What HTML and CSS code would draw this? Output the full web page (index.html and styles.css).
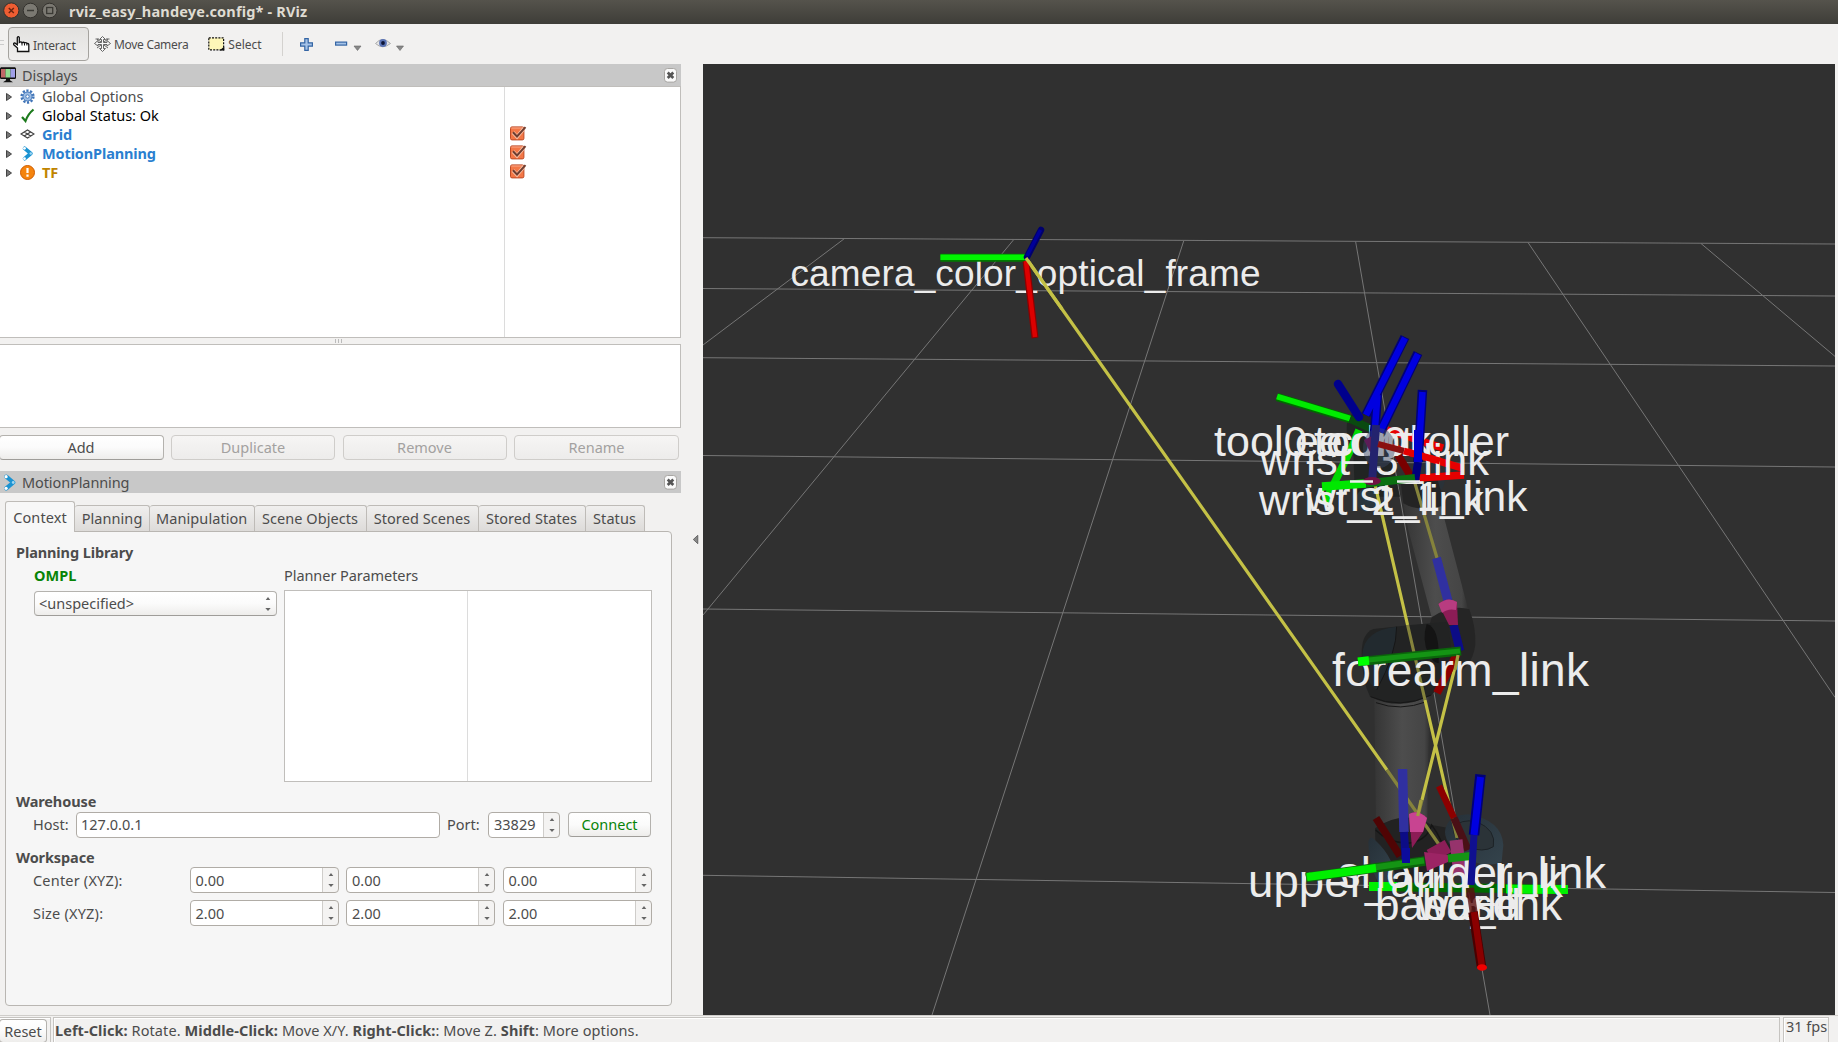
FILE: index.html
```html
<!DOCTYPE html>
<html lang="en">
<head>
<meta charset="utf-8">
<title>rviz_easy_handeye.config* - RViz</title>
<link rel="stylesheet" href="styles.css">
</head>
<body>
<svg width="0" height="0" class="defs">
  <defs>
    <symbol id="arm" viewBox="0 0 16 16"><path d="M5 2.500 L11.500 8 L5 13.500" fill="none" stroke="#1b93d2" stroke-width="4" stroke-linejoin="round" stroke-linecap="round"/><circle cx="4.800" cy="2.500" r="1.500" fill="#fff"/><circle cx="11.500" cy="8" r="1.300" fill="#9fd6f2"/><circle cx="4.800" cy="13.500" r="1.500" fill="#fff"/></symbol>
    <symbol id="tri" viewBox="0 0 8 10"><path d="M1.500 1.500 L6.500 5 L1.500 8.500 Z" fill="#777" stroke="#444" stroke-width="1"/></symbol>
    <symbol id="check" viewBox="0 0 17 15"><rect x="0.500" y="0.900" width="13.400" height="13" rx="1.500" fill="#f37746" stroke="#bd4b26"/><path d="M1.500 2 H13" stroke="#f9a98a"/><path d="M3 6.500 L7 10.800 L14 2.500" fill="none" stroke="#fbc0a5" stroke-width="3.600"/><path d="M3 6.200 L7 10.500 L15.500 1.200" fill="none" stroke="#6e3d30" stroke-width="2"/></symbol>
    <symbol id="close" viewBox="0 0 13 15"><rect x="0.500" y="0.500" width="12" height="13.600" rx="3" fill="#fafafa" stroke="#a8a6a3"/><path d="M3.700 4.500 L9.300 10 M9.300 4.500 L3.700 10" stroke="#555" stroke-width="2.700"/></symbol>
    <symbol id="spin" viewBox="0 0 8 16"><path d="M1.700 4 L4 1 L6.300 4 Z M1.300 12 L4 15 L6.700 12 Z" fill="#666"/></symbol>
  </defs>
</svg>
<header class="titlebar">
  <svg width="60" height="24" viewBox="0 0 60 24"><circle cx="11.300" cy="10.500" r="7.600" fill="#ee5d32" stroke="#33312d"/><path d="M8.800 8 L13.800 13 M13.800 8 L8.800 13" stroke="#6a2410" stroke-width="1.500"/><circle cx="30.500" cy="10.500" r="7.300" fill="#7b7972" stroke="#33312d"/><path d="M27 10.500 H34" stroke="#3a3934" stroke-width="1.500"/><circle cx="49.700" cy="10.500" r="7.300" fill="#7b7972" stroke="#33312d"/><rect x="46.700" y="7.500" width="6" height="6" fill="none" stroke="#3a3934" stroke-width="1.300"/></svg>
  <span class="title">rviz_easy_handeye.config* - RViz</span>
</header>
<nav class="toolbar">
  <span class="grip"></span>
  <button class="tool active"><svg width="18" height="18" viewBox="0 0 18 18"><path d="M4.500 16.500 V13 L.8 9.800 Q0 8 1.800 8 L4.300 9.800 V2.500 Q5.300 .6 6.300 2.500 V7.500 Q8 6.300 9 7.800 Q10.500 6.600 11.500 8 Q13.100 7 14 8.600 Q15.500 8 15.800 9.700 V16.500 Z" fill="#fff" stroke="#111" stroke-width="1.300"/><path d="M9 8 V10.500 M11.500 8.300 V10.500 M13.900 8.800 V10.500" stroke="#111"/></svg><span>Interact</span></button>
  <button class="tool move"><svg width="17" height="16" viewBox="0 0 17 16"><g fill="#f8f8f8" stroke="#555" stroke-width="0.900"><path d="M8.500 .5 L11.500 3.500 H9.500 V6.500 H13 V4.500 L16.500 7.500 L13 10 V8.500 H9.500 V12.500 H11.500 L8.500 15.500 L5.500 12.500 H7.500 V8.500 H4 V10 L.5 7.500 L4 4.500 V6.500 H7.500 V3.500 H5.500 Z"/><path d="M3 3 L7 6 M14 3 L10 6 M3 12 L7 9 M14 12 L10 9 M1.500 3 H5 M12 3 H15.500"/></g></svg><span>Move Camera</span></button>
  <button class="tool select"><svg width="17" height="14" viewBox="0 0 17 14"><rect x="0.800" y="0.800" width="14.800" height="12" fill="#fdf6b8" stroke="#111" stroke-width="1.200" stroke-dasharray="2 1.200"/><path d="M16.300 9.500 V13.500 H11.500 Z" fill="#111"/></svg><span>Select</span></button>
  <span class="sep"></span>
  <svg class="plus" width="13" height="13" viewBox="0 0 13 13"><path d="M4.800 .6 H8.200 V4.800 H12.400 V8.200 H8.200 V12.400 H4.800 V8.200 H.6 V4.800 H4.800 Z" fill="#a5c3e8" stroke="#3465a4" stroke-width="1.200"/></svg>
  <svg class="minus" width="27" height="14" viewBox="0 0 27 14"><rect x="0.600" y="5.100" width="11" height="3" fill="#a5c3e8" stroke="#3465a4" stroke-width="1.200"/><path d="M19 9 H26 L22.500 13.500 Z" fill="#888" stroke="#666" stroke-width="0.600"/></svg>
  <svg class="eye" width="29" height="14" viewBox="0 0 29 14"><path d="M.5 6.500 Q7.500 -1.500 15.500 6.500 Q7.500 13 .5 6.500 Z" fill="#e6e6e6" stroke="#aaa"/><circle cx="8" cy="6" r="3.900" fill="#5b74b5"/><circle cx="8" cy="6" r="1.900" fill="#0c1436"/><path d="M21.500 9 H28.500 L25 13.500 Z" fill="#888" stroke="#666" stroke-width="0.600"/></svg>
</nav>
<main class="work">
  <section class="side">
    <div class="dock-title"><svg width="17" height="16" viewBox="0 0 17 16"><rect x="0.500" y="0.800" width="15" height="10.700" rx="0.500" fill="#111" stroke="#111"/><path d="M1 2 H5.500 V10.500 H1Z" fill="#c06868"/><path d="M5.500 2 H10.500 V10.500 H5.500Z" fill="#90dc90"/><path d="M10.500 2 H15 V10.500 H10.500Z" fill="#a0a0e8"/><path d="M6 11.500 H10 V13.300 L13 15.300 H3 L6 13.300Z" fill="#111"/></svg><span class="dt">Displays</span><svg class="close" width="13" height="15"><use href="#close"/></svg></div>
    <div class="tree">
      <div class="names">
        <div class="row"><svg width="8" height="10"><use href="#tri"/></svg><svg class="ic" width="15" height="15" viewBox="0 0 16 16"><circle cx="8" cy="8" r="6.300" fill="none" stroke="#3f74b8" stroke-width="2.600" stroke-dasharray="2.300 1.660"/><circle cx="8" cy="8" r="4.800" fill="#9dbde4" stroke="#3f74b8"/><circle cx="8" cy="8" r="1.800" fill="#fff" stroke="#3f74b8" stroke-width="1"/></svg><span>Global Options</span></div>
        <div class="row black"><svg width="8" height="10"><use href="#tri"/></svg><svg class="ic" width="15" height="15" viewBox="0 0 15 15"><path d="M2 9 L5.500 13 Q8 6 13.500 1.500" fill="none" stroke="#1c7a1c" stroke-width="2.200"/></svg><span>Global Status: Ok</span></div>
        <div class="row blue"><svg width="8" height="10"><use href="#tri"/></svg><svg class="ic" width="15" height="15" viewBox="0 0 15 15"><path d="M1 7 L7.500 3 L14 7 L7.500 11 Z M4.200 5 L10.700 9 M10.700 5 L4.200 9" fill="none" stroke="#444" stroke-width="1.200"/></svg><span>Grid</span></div>
        <div class="row blue"><svg width="8" height="10"><use href="#tri"/></svg><svg class="ic" width="15" height="15"><use href="#arm"/></svg><span>MotionPlanning</span></div>
        <div class="row amber"><svg width="8" height="10"><use href="#tri"/></svg><svg class="ic" width="15" height="15" viewBox="0 0 15 15"><circle cx="7.500" cy="7.500" r="7" fill="#f5840e" stroke="#ce5c00"/><path d="M7.500 3 V8 M7.500 9.500 V11.800" stroke="#fff" stroke-width="2.200"/></svg><span>TF</span></div>
      </div>
      <div class="checks">
        <svg width="17" height="15"><use href="#check"/></svg><svg width="17" height="15"><use href="#check"/></svg><svg width="17" height="15"><use href="#check"/></svg>
      </div>
    </div>
    <div class="splitter"><i></i><i></i><i></i></div>
    <div class="help"></div>
    <div class="buttons"><button class="btn">Add</button><button class="btn off">Duplicate</button><button class="btn off">Remove</button><button class="btn off">Rename</button></div>
    <div class="dock-title"><svg class="armic" width="17" height="17"><use href="#arm"/></svg><span class="dt2">MotionPlanning</span><svg class="close" width="13" height="15"><use href="#close"/></svg></div>
    <div class="tabs"><span class="tab on">Context</span><span class="tab w1">Planning</span><span class="tab w2">Manipulation</span><span class="tab w3">Scene Objects</span><span class="tab w4">Stored Scenes</span><span class="tab w5">Stored States</span><span class="tab w6">Status</span></div>
    <div class="pane">
      <h3>Planning Library</h3>
      <div class="planning">
        <div class="lib"><b>OMPL</b><div class="combo"><span>&lt;unspecified&gt;</span><svg width="8" height="16"><use href="#spin"/></svg></div></div>
        <div class="params"><span>Planner Parameters</span><div class="table"><div class="half"></div></div></div>
      </div>
      <h3 class="wh">Warehouse</h3>
      <div class="hostrow"><label>Host:</label><div class="field">127.0.0.1</div><label class="port">Port:</label><div class="spin p"><span>33829</span><svg width="8" height="16"><use href="#spin"/></svg></div><button class="btn connect">Connect</button></div>
      <h3 class="ws">Workspace</h3>
      <div class="xyz"><label>Center (XYZ):</label><div class="spin"><span>0.00</span><svg width="8" height="16"><use href="#spin"/></svg></div><div class="spin"><span>0.00</span><svg width="8" height="16"><use href="#spin"/></svg></div><div class="spin"><span>0.00</span><svg width="8" height="16"><use href="#spin"/></svg></div></div>
      <div class="xyz"><label>Size (XYZ):</label><div class="spin"><span>2.00</span><svg width="8" height="16"><use href="#spin"/></svg></div><div class="spin"><span>2.00</span><svg width="8" height="16"><use href="#spin"/></svg></div><div class="spin"><span>2.00</span><svg width="8" height="16"><use href="#spin"/></svg></div></div>
    </div>
  </section>
  <div class="gutter"><svg width="7" height="12" viewBox="0 0 7 12"><path d="M5.800 1.300 L1.300 5.500 L5.800 9.700 Z" fill="#888" stroke="#555" stroke-width="0.800"/></svg></div>
  <svg class="view" width="1132" height="951" viewBox="703 64 1132 951">
    <defs>
      <linearGradient id="tube" x1="0" x2="1" y1="0" y2="0"><stop offset="0" stop-color="#353535"/><stop offset="0.500" stop-color="#4d4d4d"/><stop offset="0.900" stop-color="#454545"/><stop offset="1" stop-color="#303030"/></linearGradient>
      <linearGradient id="steel" x1="0" x2="1" y1="0" y2="1"><stop offset="0" stop-color="#263038"/><stop offset="1" stop-color="#34434c"/></linearGradient>
    </defs>
    <rect x="703" y="64" width="1132" height="951" fill="#303030"/>
    <g stroke="#767676" stroke-width="1" fill="none">
      <path d="M703 237.700 L1835 244 M703 288.500 L1835 296 M703 357.700 L1835 366 M703 455.500 L1835 467 M703 609 L1835 621 M703 875.300 L1835 892.500"/>
      <path d="M843.900 239 L703 345 M1013.400 240 L703 615 M1183.700 241 L932 1015 M1355.600 241.500 L1490 1015 M1528 242.500 L1835 697.400 M1701 243.500 L1835 356.400"/>
    </g>
    <!-- robot body, local units are thirds of a pixel -->
    <g transform="translate(1200 530) scale(.33333)">
      <path d="M607 -90 L708 -130 L742 0 L805 240 L695 262 L625 0 Z" fill="url(#tube)"/>
      <path d="M523 500 L690 500 L684 720 L682 880 L528 880 Z" fill="url(#tube)"/>
      <path d="M695 262 Q755 222 808 238 Q828 290 826 345 Q815 420 755 432 L700 480 L690 280 Z" fill="#252525"/>
      <path d="M485 370 Q485 310 520 297 L640 284 L745 275 L760 430 L694 495 Q600 545 510 500 Q485 450 485 370 Z" fill="#222323"/>
      <path d="M487 375 Q490 300 590 290 Q590 370 530 480 Q485 440 487 375 Z" fill="#222a2f"/>
      <path d="M680 282 Q720 290 716 400 Q700 400 685 370 Q665 330 680 282 Z" fill="#141414"/>
      <path d="M512 500 Q600 540 694 495 M528 518 Q600 545 680 515 M590 290 Q590 370 530 480" fill="none" stroke="#161616" stroke-width="3"/>
    </g>
    <g transform="translate(1220 750) scale(.33333)">
      <path d="M465 235 Q550 175 635 225 L690 235 L740 330 L640 400 L470 400 Z" fill="#222"/>
      <path d="M467 240 Q500 275 560 280 Q620 275 635 225 Q670 270 680 330" fill="none" stroke="#151515" stroke-width="4"/>
      <path d="M445 275 Q450 255 465 270 Q530 330 525 400 L475 400 Q445 340 445 275 Z" fill="url(#steel)"/>
      <path d="M675 245 Q680 195 745 193 Q845 210 850 285 L845 335 Q800 355 750 330 Q675 290 675 245 Z" fill="url(#steel)"/>
      <path d="M700 235 Q720 205 770 215 Q830 240 820 290 Q790 310 740 290 Q700 270 700 235 Z" fill="#2b3338" stroke="#1c2226" stroke-width="3"/>
    </g>
    <g transform="translate(1180 320) scale(.33333)">
      <path d="M505 290 Q540 265 580 290 L640 440 L660 530 L525 530 L520 400 Q490 340 505 290Z" fill="#1f2221" fill-opacity="0.850"/>
      <path d="M700 440 Q790 400 795 480 Q790 520 760 520 Z" fill="#2a3238"/>
      <path d="M660 470 L770 470 L795 555 Q720 580 670 550Z" fill="#242424"/>
      <ellipse cx="560" cy="540" rx="32" ry="35" fill="#2a363d"/>
    </g>
    <g stroke="#c4c146" stroke-width="3.200" fill="none">
      <path d="M1026 258 L1387 770 M1374 480 L1407.600 625 M1425 700 L1451.700 815 M1458 655 L1422 800"/>
      <path d="M1387 770 L1440 846 M1407.600 625 L1425 700 M1414 480 L1437 558 M1422 800 L1417.700 817 M1451.700 815 L1457 838" stroke="#85833c"/>
    </g>
    <g stroke-width="7.500" fill="none">
      <path d="M1359 430 L1352 447 L1324 504" stroke="#00d800"/>
      <path d="M1277 397 L1350 419" stroke="#006a00" stroke-width="8.500"/><path d="M1277 396.500 L1350 418.500" stroke="#00ec00" stroke-width="6"/><path d="M1350 419 L1374 430" stroke="#0a4a10"/>
      <path d="M1376 818 L1400 856" stroke="#500404"/><path d="M1439 786 L1454 818" stroke="#8c0000" stroke-width="6.500"/><path d="M1454 818 L1468 850" stroke="#4a1016"/>
      <path d="M1369 886.500 L1568 889.500" stroke="#006a00" stroke-width="9"/><path d="M1369 886.500 H1397 M1506 889 L1568 889.500" stroke="#00f000" stroke-width="9"/>
      <path d="M1430 856 L1448 846" stroke="#8c1e58" stroke-width="14"/>
      <path d="M1456 840 L1460 875" stroke="#96336c" stroke-width="13"/>
      <path d="M1387 430 L1443 448 M1378 443 L1462 468" stroke="#e60000"/><path d="M1398 455 L1413 480" stroke="#7a0000"/><path d="M1419 478 L1464 475" stroke="#e60000"/>
      <path d="M1457 654 L1437 693" stroke="#8c0000" stroke-width="8"/>
    </g>
    <g class="labels">
      <text x="790.500" y="286" font-size="37" textLength="470">camera_color_optical_frame</text>
      <text x="1214" y="455.700" font-size="43" textLength="295">tool0_controller</text>
      <text x="1314" y="455.700" font-size="43" textLength="93">tool0</text>
      <text x="1295" y="455.700" font-size="43" textLength="136">ee_link</text>
      <text x="1260" y="474.700" font-size="43.500" textLength="229">wrist_3_link</text>
      <text x="1259" y="514.700" font-size="43" textLength="225">wrist_2_link</text>
      <text x="1305.500" y="510.700" font-size="42.500" textLength="222">wrist_1_link</text>
      <text x="1332" y="685.600" font-size="46" textLength="257">forearm_link</text>
      <text x="1338" y="887.700" font-size="45" textLength="268">shoulder_link</text>
      <text x="1248" y="897" font-size="45.500" textLength="315">upper_arm_link</text>
      <text x="1375" y="920" font-size="44" textLength="187">base_link</text>
      <text x="1422" y="920" font-size="44" textLength="95">base</text>
      <text x="1417" y="920" font-size="44" textLength="104">world</text>
    </g>
    <!-- frame axes drawn in front of the captions -->
    <g fill="none" stroke-width="8">
      <path d="M940.400 257.700 H1025" stroke="#007a00"/><path d="M940.400 257.200 H1025" stroke="#00f500" stroke-width="5.500"/>
      <path d="M1041 230 L1027 257" stroke="#00006c" stroke-width="6.500" stroke-linecap="round"/><path d="M1040.500 230 L1027 256" stroke="#00009a" stroke-width="3.500"/>
      <path d="M1026 261 L1035 338" stroke="#8c0000" stroke-width="7"/><path d="M1026 261 L1035 337" stroke="#dc0000" stroke-width="4.500"/>
      <path d="M1026 258 L1062 309" stroke="#c4c146" stroke-width="3.200"/>
      <path d="M1338 384 L1359 417" stroke="#00008c" stroke-linecap="round" stroke-width="8.500"/>
      <path d="M1405 337 L1366 415 M1418 353 L1380 432 M1377.500 393 L1374 440 M1422.500 390 L1418 462" stroke="#000078" stroke-width="9.500"/>
      <path d="M1405 338 L1366 415 M1418 354 L1380 432 M1377.500 395 L1374 440 M1422.500 392 L1418 462" stroke="#0000e0" stroke-width="6.500"/>
      <ellipse cx="1379" cy="448" rx="16" ry="20" fill="#3c4a66" fill-opacity="0.450"/>
      <path d="M1368 438 L1374 450" stroke="#5c1c58" stroke-width="9"/>
      <path d="M1376 425 L1372 483" stroke="#23236e"/><path d="M1418 462 L1415 482" stroke="#00007c"/>
      <path d="M1378 444 L1404 451" stroke="#8a1010" stroke-width="6"/><path d="M1404 451 L1440 461" stroke="#e60000" stroke-width="7"/>
      <path d="M1418 430 V462" stroke="#0000d0"/>
      <path d="M1322 486.500 L1366 483.500" stroke="#00e800" stroke-width="8.500"/><path d="M1366 483.500 L1415 478" stroke="#0a7010"/>
      <ellipse cx="1372" cy="481" rx="9" ry="4" fill="#701244"/>
      <path d="M1350 481.500 H1373 M1397 481.500 H1420" stroke="#ececec" stroke-width="2.500"/>
      <path d="M1436.500 558 L1448 601" stroke="#3030a0" stroke-width="9"/>
      <path d="M1453.500 625 L1460 651" stroke="#0c0c86" stroke-width="8.500"/>
      <path d="M1438.500 604 Q1448 596 1457 602 L1458 625 H1449 Z" fill="#8c1c56"/><path d="M1438.500 604 Q1448 596 1457 602 L1456 610 Q1448 608 1442 613 Z" fill="#b83c80"/>
      <path d="M1358 661.700 L1461 651" stroke="#0b650b" stroke-width="9"/><path d="M1358 661 L1460 651" stroke="#149414" stroke-width="5"/><path d="M1358 661.700 L1369 660.500" stroke="#00ff00" stroke-width="8.500"/>
      <path d="M1409 814 Q1418 809 1427 818 L1423 832 L1412 848 Z" fill="#8c1c56"/><path d="M1409 814 Q1418 809 1427 818 L1423 832 H1410 Z" fill="#c84491"/>
      <path d="M1458 655 L1455 670 M1421 800 L1417.700 816" stroke="#a39f40" stroke-width="3.200"/>
      <path d="M1402.500 769 L1404 832" stroke="#3030a0" stroke-width="9.500"/><path d="M1404 832 L1406 865" stroke="#0c0c86"/>
      <path d="M1306 877.500 L1425 861" stroke="#0b650b" stroke-width="9.500"/><path d="M1306 877 L1424 860.500" stroke="#149414" stroke-width="6"/><path d="M1307 877 L1376 868" stroke="#00f000" stroke-width="8"/>
      <path d="M1406 848 V863" stroke="#0c0c9c"/>
      <path d="M1424 852 L1448 855 L1448 862 L1427 871 Z" fill="#9c2464"/>
      <path d="M1448 858.500 L1471 856" stroke="#149414" stroke-width="8"/>
      <path d="M1480.500 774.500 L1474 835" stroke="#000078" stroke-width="10.500"/><path d="M1480.500 777 L1474 835" stroke="#0000e0" stroke-width="7"/><path d="M1474 835 L1471 885" stroke="#101090" stroke-width="7"/>
      <path d="M1470 888 L1474 915" stroke="#5a1010" stroke-opacity="0.800"/><path d="M1473 912 L1481.500 967" stroke="#4a0000" stroke-width="9.500"/><path d="M1474 912 L1482 967" stroke="#8a0000" stroke-width="6.500"/><ellipse cx="1482" cy="967.500" rx="5" ry="3.200" fill="#f00000"/>
    </g>
  </svg>
</main>
<footer class="status">
  <div class="cell reset"><button class="btn">Reset</button></div>
  <div class="cell msg"><b>Left-Click:</b> Rotate. <b>Middle-Click:</b> Move X/Y. <b>Right-Click:</b>: Move Z. <b>Shift</b>: More options.</div>
  <div class="cell fps">31 fps</div>
</footer>
</body>
</html>
```
FILE: styles.css
```css
* { box-sizing: border-box; }
body { margin: 0; width: 1838px; height: 1042px; overflow: hidden; display: flex; flex-direction: column; background: #f2f1f0; color: #4c4c4c; font: 14.5px/19px "Noto Sans", sans-serif; white-space: nowrap; }
button { font: inherit; color: inherit; padding: 0; margin: 0; border: 0; background: none; display: flex; align-items: center; justify-content: center; }
svg { flex: none; display: block; }
.defs { display: none; }
.titlebar { height: 24px; flex: none; display: flex; background: linear-gradient(#55534c, #3e3d38); color: #dfdbd2; font-weight: 700; }
.title { margin-left: 9px; line-height: 22px; font-size: 14.500px; letter-spacing: 0.180px; }
.toolbar { height: 40px; flex: none; display: flex; align-items: center; font-size: 12px; }
.grip { width: 4px; height: 8px; margin-right: 4px; background: repeating-linear-gradient(#ccc 0 1px, transparent 1px 4px); }
.tool { height: 33px; }
.active { width: 81px; height: 34px; justify-content: flex-start; padding-left: 4px; gap: 2px; border: 1px solid #a5a39f; border-radius: 4px; background: linear-gradient(#e3e2e0, #efeeed); letter-spacing: -0.200px; }
.active span { padding-top: 2px; }
.move { margin-left: 5px; gap: 3px; letter-spacing: -0.300px; }
.select { margin-left: 20px; gap: 3px; }
.sep { width: 1px; height: 24px; margin-left: 20px; background: #d4d2cf; }
.plus { margin-left: 17px; }
.minus { margin-left: 22px; }
.eye { margin-left: 13px; }
.work { flex: none; height: 951px; display: flex; }
.side { width: 681px; display: flex; flex-direction: column; flex: none; }
.dock-title { height: 22px; flex: none; display: flex; align-items: center; background: #c8c8c8; }
.dt { margin-left: 5px; letter-spacing: -0.100px; }
.armic { margin-left: 1px; }
.dt2 { margin-left: 4px; letter-spacing: -0.100px; }
.close { margin: 0 4px 0 auto; }
.tree { height: 252px; flex: none; display: flex; background: #fff; border: 1px solid #c0bebb; border-left: 0; }
.names { width: 505px; border-right: 1px solid #dcdcdc; }
.row { height: 19px; display: flex; align-items: center; padding-left: 5px; }
.ic { margin: 0 7px; }
.black { color: #000; }
.blue { color: #2a7fd0; font-weight: 700; letter-spacing: -0.130px; }
.amber { color: #c08400; font-weight: 700; }
.checks { padding: 39px 0 0 5px; display: flex; flex-direction: column; gap: 4px; }
.splitter { height: 6px; flex: none; display: flex; gap: 2px; justify-content: center; align-items: center; padding-right: 4px; }
.splitter i { width: 1px; height: 4px; background: #bbb; }
.help { height: 84px; flex: none; background: #fff; border: 1px solid #c0bebb; border-left: 0; }
.buttons { display: grid; grid-template-columns: 165px 164px 164px 165px; gap: 7.500px; margin: 7px 0 11px -1.500px; }
.btn { height: 25px; border: 1px solid #b4b2ae; border-bottom-color: #9f9d99; border-radius: 4px; background: linear-gradient(#fff, #fbfbfb 50%, #eeedeb); }
.off { color: #a3a1a0; border-color: #cfcdca; background: linear-gradient(#f6f5f4, #edeceb); }
.tabs { height: 38px; flex: none; padding: 9px 0 0 5px; display: flex; align-items: flex-end; }
.tab { height: 26px; border: 1px solid #bebbb7; border-left: 0; border-bottom: 0; border-radius: 3px 3px 0 0; background: linear-gradient(#f0efee, #dddbd9); display: flex; align-items: center; justify-content: center; letter-spacing: 0.070px; }
.on { width: 70px; height: 31px; margin-bottom: -1px; border-left: 1px solid #bebbb7; background: #f7f7f7; z-index: 1; }
.w1 { width: 75px; } .w2 { width: 104.500px; } .w3 { width: 112px; } .w4 { width: 112px; } .w5 { width: 107px; } .w6 { width: 59px; }
.pane { width: 667px; height: 475px; margin-left: 5px; flex: none; border: 1px solid #b9b6b2; border-radius: 0 4px 4px 4px; background: #f6f6f6; padding: 11px 0 0 10px; }
h3 { margin: 0; font: inherit; font-weight: 700; height: 19px; letter-spacing: -0.100px; }
.planning { display: flex; padding: 4px 0 0 18px; height: 221px; }
.lib { width: 250px; }
.lib b { color: #078407; }
.combo { width: 243px; height: 25px; margin-top: 6px; border: 1px solid #b4b2ae; border-bottom-color: #9f9d99; border-radius: 4px; background: linear-gradient(#fff, #fbfbfb 50%, #eeedeb); display: flex; align-items: center; justify-content: space-between; padding: 0 4px; }
.params span { letter-spacing: -0.060px; }
.table { width: 368px; height: 192px; margin-top: 5px; background: #fff; border: 1px solid #c0bebb; }
.half { width: 183px; height: 190px; border-right: 1px solid #dcdcdc; }
.wh { margin-top: 9px; }
.hostrow { display: flex; align-items: center; height: 25px; margin: 1px 0 0 17px; }
.hostrow label { width: 43px; }
.hostrow .port { width: 41px; margin-left: 7px; }
.field { width: 364px; height: 26px; border: 1px solid #b0aca6; border-radius: 4px; background: #fff; padding: 2px 4px; }
.spin { width: 149px; height: 26px; border: 1px solid #b0aca6; border-radius: 4px; background: linear-gradient(90deg, #fff calc(100% - 16px), #cfcdca calc(100% - 16px), #cfcdca calc(100% - 15px), #f4f3f2 calc(100% - 15px)); display: flex; align-items: center; justify-content: space-between; padding: 0 3px 0 5px; }
.p { width: 72px; }
.connect { width: 83px; margin-left: 8px; color: #078407; }
.ws { margin-top: 11px; }
.xyz { display: flex; align-items: center; gap: 7.500px; height: 26px; margin: 0 0 7px 17px; }
.xyz label { width: 149px; letter-spacing: 0.200px; }
.gutter { width: 22px; flex: none; display: flex; align-items: center; padding-left: 11px; }
.labels { fill: #ececec; font-family: "Liberation Sans", Arial, sans-serif; }
.status { height: 27px; flex: none; display: flex; border-top: 1px solid #cfcdca; gap: 2px; }
.cell { height: 30px; margin-top: 1px; border: 1px solid #c6c4c1; box-shadow: inset 1px 1px #fff; }
.reset { width: 51px; border-left: 0; flex: none; }
.reset .btn { width: 48px; height: 24px; margin: 1px 0 0 -1px; }
.msg { flex: none; width: 1727px; padding: 3px 0 0 1px; letter-spacing: 0.083px; }
.fps { width: 46px; flex: none; padding: 0 0 0 2px; margin-left: 1px; line-height: 17px; }
```
